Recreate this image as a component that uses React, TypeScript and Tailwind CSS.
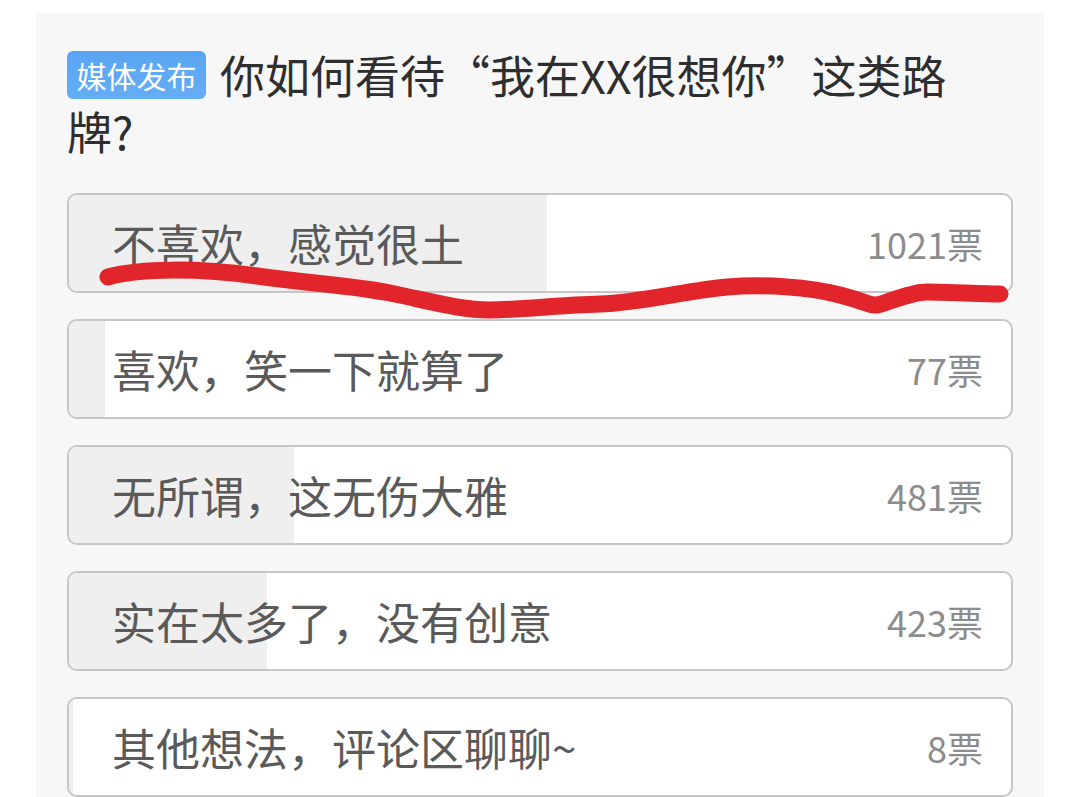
const options = [
  { label: '不喜欢，感觉很土', votes: 1021 },
  { label: '喜欢，笑一下就算了', votes: 77 },
  { label: '无所谓，这无伤大雅', votes: 481 },
  { label: '实在太多了，没有创意', votes: 423 },
  { label: '其他想法，评论区聊聊~', votes: 8 }
]

const total = options.reduce((sum, o) => sum + o.votes, 0)

function PollOption({ label, votes }: { label: string; votes: number }) {
  const pct = (votes / total) * 100
  return (
    <div className="relative flex h-[100px] shrink-0 items-center justify-between overflow-hidden rounded-[10px] border-2 border-[#c6c6c6] bg-white pl-[43px] pr-[28px]">
      <div
        className="absolute bottom-0 left-0 top-0 bg-[#efefef]"
        style={{ width: `${pct}%` }}
      />
      <span className="relative text-[44px] leading-none text-[#5a5a5a]">
        {label}
      </span>
      <span className="relative text-[36px] leading-none text-[#8c8c8c]">
        {votes}票
      </span>
    </div>
  )
}

export default function App() {
  return (
    <div
      className="relative h-[797px] w-[1080px] overflow-hidden bg-white px-[36px] pt-[13px]"
      style={{ fontFamily: '"Noto Sans CJK SC", "Noto Sans", sans-serif' }}
    >
      <div className="h-[900px] w-[1008px] bg-[#f7f7f7] px-[31px] pt-[34px]">
        {/* Title */}
        <div className="text-[45px] leading-[56px] text-[#2e2e2e]">
          <div className="flex items-center gap-[14px]">
            <span className="flex h-[48px] w-[139px] items-center justify-center rounded-[6px] bg-gradient-to-b from-[#5aa5f3] to-[#64adf6] text-[30px] leading-none text-white">
              媒体发布
            </span>
            <span>你如何看待“我在XX很想你”这类路</span>
          </div>
          <div>牌?</div>
        </div>

        {/* Options */}
        <div className="mt-[34px] flex flex-col gap-[26px]">
          {options.map((o) => (
            <PollOption key={o.label} label={o.label} votes={o.votes} />
          ))}
        </div>
      </div>

      {/* Hand-drawn red underline */}
      <svg
        className="pointer-events-none absolute left-0 top-0"
        width="1080"
        height="797"
        viewBox="0 0 1080 797"
      >
        <path
          d="M108,277 C140,268 200,268 257,276 S350,285 390,293 S460,310 490,310 S560,305 600,304 S690,290 727,287 S810,287 840,295 S870,306 877,305 S910,292 927,292 S990,294 1000,294"
          fill="none"
          stroke="#e1252a"
          strokeWidth="17"
          strokeLinecap="round"
          strokeLinejoin="round"
        />
      </svg>
    </div>
  )
}
